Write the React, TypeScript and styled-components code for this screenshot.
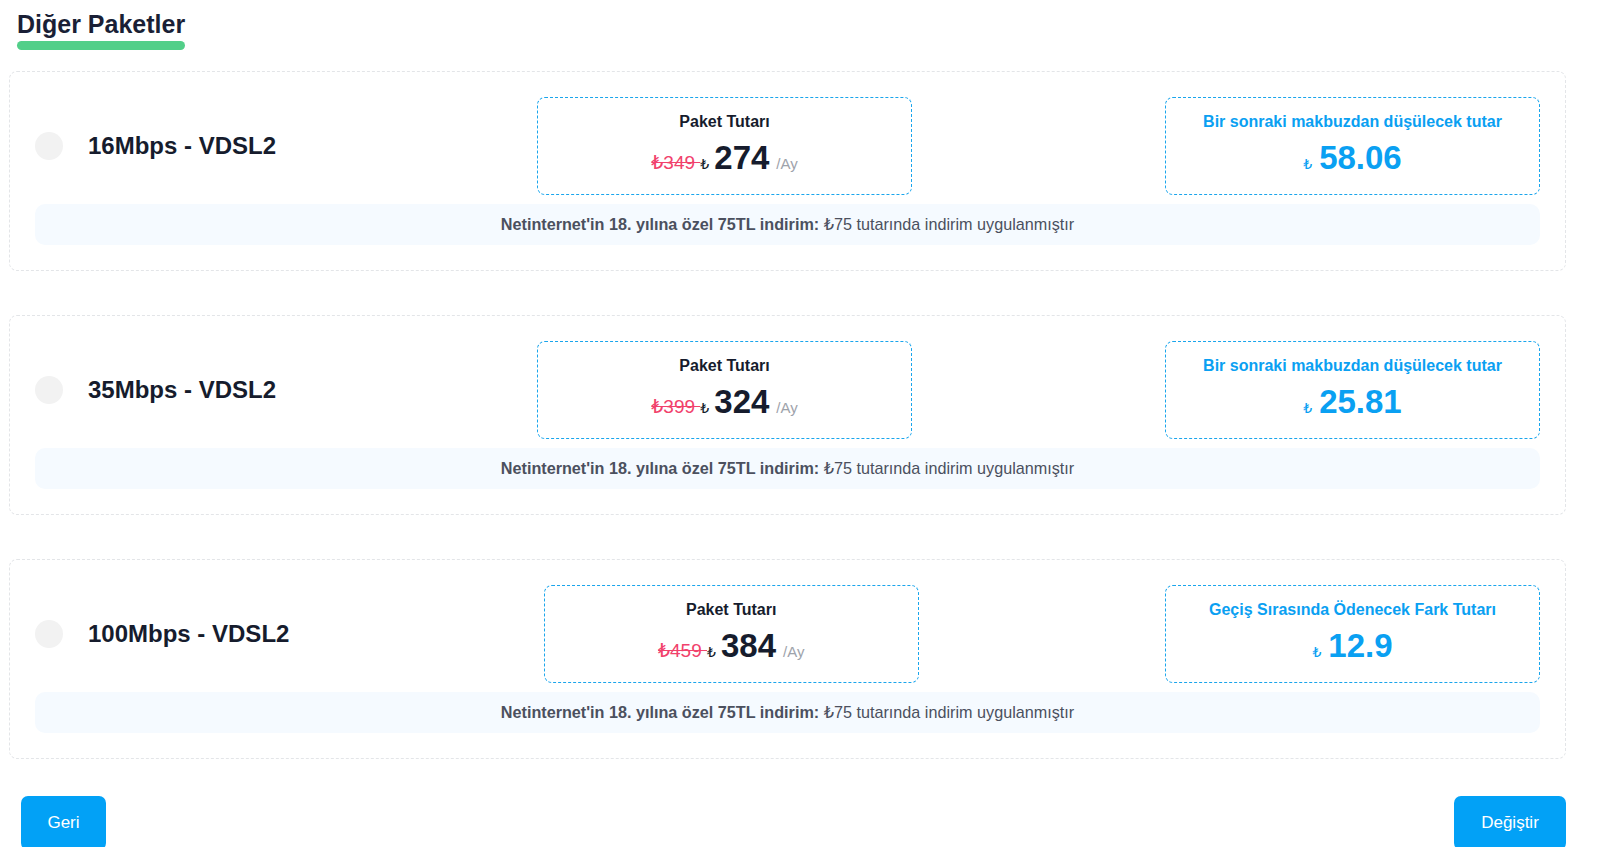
import React from "react";
import styled, { createGlobalStyle } from "styled-components";

const GlobalStyle = createGlobalStyle`
  html, body {
    margin: 0;
    padding: 0;
    background: #ffffff;
    font-family: "Liberation Sans", Arial, "DejaVu Sans", sans-serif;
  }
  * { box-sizing: border-box; }
`;

const Page = styled.div`
  padding: 9px 35px 0 9px;
  width: 1601px;
`;

const TitleWrap = styled.div`
  padding-left: 8px;
`;

const Title = styled.h2`
  display: inline-block;
  margin: 0;
  font-size: 25px;
  line-height: 30px;
  font-weight: 700;
  color: #1a1f36;
  &::after {
    content: "";
    display: block;
    height: 9px;
    margin-top: 2px;
    border-radius: 5px;
    background: #52cf89;
  }
`;

const CardList = styled.div`
  margin-top: 21px;
  display: flex;
  flex-direction: column;
  gap: 44px;
`;

const Card = styled.div`
  border: 1px dashed #e3e5e8;
  border-radius: 8px;
  padding: 25px;
`;

const Row = styled.div`
  display: flex;
  align-items: center;
  justify-content: space-between;
`;

const NameGroup = styled.label`
  display: flex;
  align-items: center;
  gap: 25px;
  padding-right: 8px;
`;

const Radio = styled.span`
  width: 28px;
  height: 28px;
  border-radius: 50%;
  background: #f2f2f2;
  flex: none;
`;

const Name = styled.span`
  font-size: 24px;
  font-weight: 700;
  color: #161c2d;
`;

const InfoBox = styled.div<{ $accent?: boolean }>`
  width: 375px;
  height: 98px;
  border: 1px dashed #1aa5ec;
  border-radius: 8px;
  display: flex;
  flex-direction: column;
  align-items: center;
  justify-content: flex-start;
  gap: 8px;
  padding-top: 14px;
  color: ${(p) => (p.$accent ? "#0aa0f2" : "#161c2d")};
`;

const BoxLabel = styled.div`
  font-size: 16px;
  line-height: 19px;
  font-weight: 700;
`;

const PriceLine = styled.div`
  display: flex;
  align-items: baseline;
  line-height: 37px;
`;

const OldPrice = styled.span`
  font-size: 19px;
  color: #f1426c;
  text-decoration: line-through;
  white-space: pre;
`;

const Currency = styled.span<{ $gap?: number }>`
  font-size: 14px;
  margin-right: ${(p) => p.$gap ?? 5}px;
`;

const Amount = styled.span`
  font-size: 33px;
  font-weight: 700;
`;

const Period = styled.span`
  font-size: 15px;
  color: #9ea3ab;
  margin-left: 7px;
`;

const DiscountBar = styled.div`
  margin-top: 9px;
  height: 41px;
  border-radius: 10px;
  background: #f5faff;
  display: flex;
  align-items: center;
  justify-content: center;
  font-size: 16.2px;
  color: #4b505e;
  white-space: pre;
`;

const Strong = styled.b`
  font-weight: 700;
`;

const Footer = styled.div`
  margin-top: 37px;
  padding-left: 12px;
  display: flex;
  justify-content: space-between;
`;

const Button = styled.button<{ $w: number }>`
  height: 54px;
  border: none;
  border-radius: 7px;
  background: #02a1f6;
  color: #ffffff;
  font-family: "Liberation Sans", Arial, sans-serif;
  font-size: 17px;
  cursor: pointer;
  padding: 0;
  width: ${(p) => p.$w}px;
`;

type Pkg = {
  name: string;
  oldPrice: string;
  price: string;
  label: string;
  diff: string;
};

const packages: Pkg[] = [
  { name: "16Mbps - VDSL2", oldPrice: "₺349 ", price: "274", label: "Bir sonraki makbuzdan düşülecek tutar", diff: "58.06" },
  { name: "35Mbps - VDSL2", oldPrice: "₺399 ", price: "324", label: "Bir sonraki makbuzdan düşülecek tutar", diff: "25.81" },
  { name: "100Mbps - VDSL2", oldPrice: "₺459 ", price: "384", label: "Geçiş Sırasında Ödenecek Fark Tutarı", diff: "12.9" },
];

export default function App() {
  return (
    <>
      <GlobalStyle />
      <Page>
        <TitleWrap>
          <Title>Diğer Paketler</Title>
        </TitleWrap>
        <CardList>
          {packages.map((p) => (
            <Card key={p.name}>
              <Row>
                <NameGroup>
                  <Radio />
                  <Name>{p.name}</Name>
                </NameGroup>
                <InfoBox>
                  <BoxLabel>Paket Tutarı</BoxLabel>
                  <PriceLine>
                    <OldPrice>{p.oldPrice}</OldPrice>
                    <Currency $gap={5}>₺</Currency>
                    <Amount>{p.price}</Amount>
                    <Period>/Ay</Period>
                  </PriceLine>
                </InfoBox>
                <InfoBox $accent>
                  <BoxLabel>{p.label}</BoxLabel>
                  <PriceLine>
                    <Currency $gap={7}>₺</Currency>
                    <Amount>{p.diff}</Amount>
                  </PriceLine>
                </InfoBox>
              </Row>
              <DiscountBar>
                <Strong>Netinternet'in 18. yılına özel 75TL indirim:</Strong> ₺75 tutarında indirim uygulanmıştır
              </DiscountBar>
            </Card>
          ))}
        </CardList>
        <Footer>
          <Button $w={85}>Geri</Button>
          <Button $w={112}>Değiştir</Button>
        </Footer>
      </Page>
    </>
  );
}
